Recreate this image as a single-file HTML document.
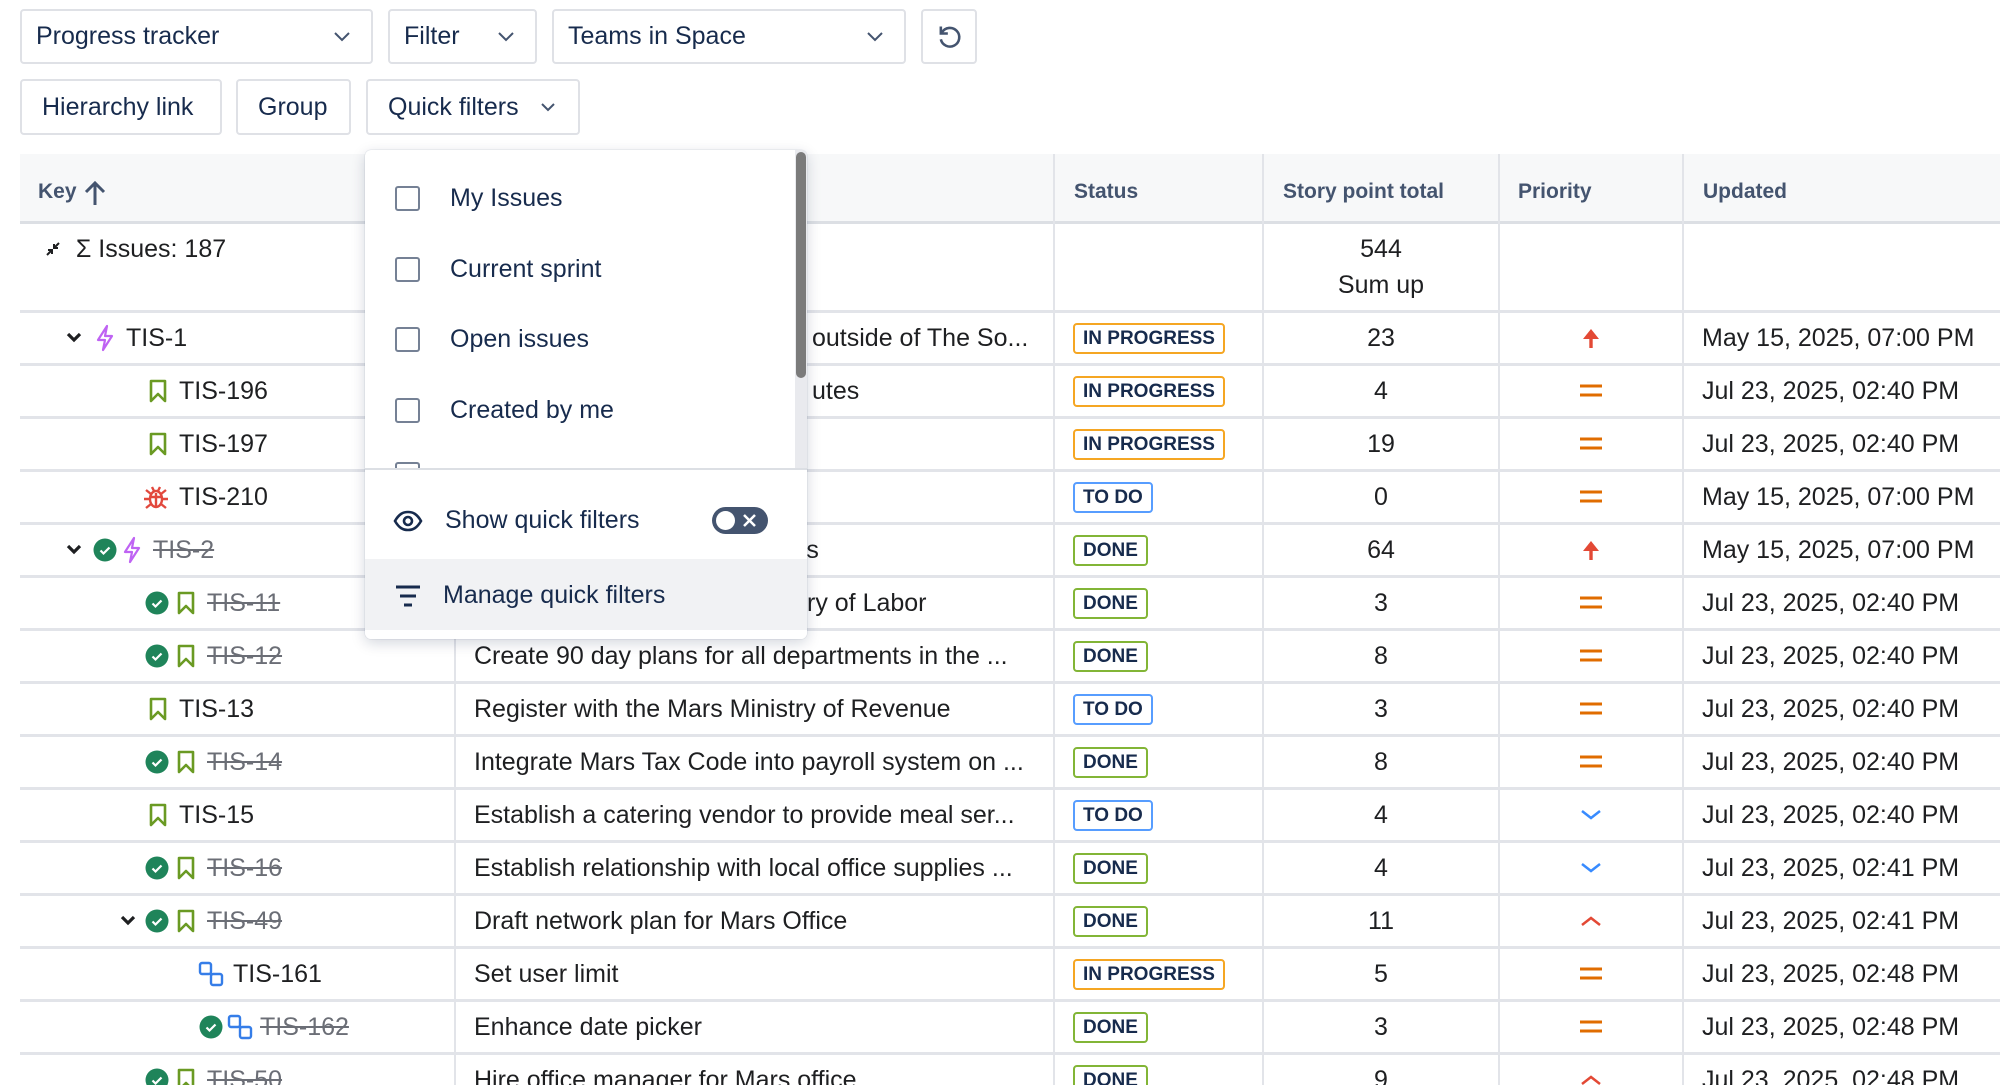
<!DOCTYPE html>
<html><head><meta charset="utf-8">
<style>
*{box-sizing:border-box;margin:0;padding:0}
html{width:2000px;height:1085px;overflow:hidden}
body{width:2000px;height:1085px;overflow:hidden;background:#fff;font-family:"Liberation Sans",Arial,sans-serif;color:#1e1f21;position:relative}
.btn{position:absolute;border:2px solid #dfe1e6;border-radius:4px;background:#fff;color:#172b4d;font-size:25px;display:flex;align-items:center;padding-left:14px}
.btn svg{position:absolute;right:20px}
.ab{position:absolute}
.hdr{position:absolute;top:154px;left:20px;width:1980px;height:70px;background:#f7f8f9;border-bottom:3px solid #dcdfe4}
.hl{position:absolute;font-weight:bold;font-size:21px;color:#44546f;top:180px}
.vl{position:absolute;top:154px;width:2px;height:931px;background:#e2e4e9}
.row{position:absolute;left:20px;width:1980px;height:53px;border-bottom:3px solid #e2e4e9}
.c{position:absolute;top:0;height:50px;display:flex;align-items:center;font-size:25px;white-space:nowrap}
.st{color:#6b6e76;text-decoration:line-through}
.bd{font-size:19px;font-weight:bold;color:#172b4d;border:2px solid;border-radius:4px;padding:0 8px;height:31px;line-height:27px}
.ip{border-color:#f5a623}.td{border-color:#579dff}.dn{border-color:#82b536}
.pts{left:1243px;width:236px;justify-content:center}
.pri{left:1479px;width:184px;justify-content:center}
.dt{left:1662px;padding-left:20px}
.sm{left:434px;padding-left:20px}
.bs{left:1053px}
.dd{position:absolute;left:365px;top:150px;width:442px;height:489px;background:#fff;border-radius:6px;box-shadow:0 4px 14px rgba(9,30,66,.18),0 0 1px rgba(9,30,66,.3);overflow:hidden;z-index:5}
.it{position:absolute;font-size:25px;color:#172b4d;display:flex;align-items:center}
.cb{width:25px;height:25px;border:2px solid #758195;border-radius:3px;margin-right:30px;margin-left:30px}
</style></head><body>

<svg width="0" height="0" style="position:absolute">
<defs>
<symbol id="ch" viewBox="0 0 16 12"><path d="M2 2l6 6 6-6" fill="none" stroke="#1e1f21" stroke-width="3.2"/></symbol>
<symbol id="ep" viewBox="0 0 22 28"><path d="M13 2L4 16h7l-2 10 9-14h-7z" fill="none" stroke="#bf63f3" stroke-width="2.2" stroke-linejoin="round"/></symbol>
<symbol id="bm" viewBox="0 0 18 24"><path d="M2 2h14v20l-7-7-7 7z" fill="none" stroke="#6a9a23" stroke-width="2.6" stroke-linejoin="round"/></symbol>
<symbol id="bug" viewBox="0 0 28 28"><g fill="none" stroke="#e2483d" stroke-width="2.4"><ellipse cx="14" cy="16" rx="6" ry="8"/><path d="M8 14h12M14 10v14M2 16h6M20 16h6M4 7l5 4M24 7l-5 4M4 25l5-4M24 25l-5-4M10 4l2 4M18 4l-2 4"/></g></symbol>
<symbol id="ok" viewBox="0 0 24 24"><circle cx="12" cy="12" r="11.5" fill="#1f845a"/><path d="M7.5 12.5l3 3 6-6" fill="none" stroke="#fff" stroke-width="2.2"/></symbol>
<symbol id="sub" viewBox="0 0 26 26"><g fill="none" stroke="#357de8" stroke-width="2.4"><rect x="2" y="2" width="11" height="11" rx="2"/><rect x="13" y="13" width="11" height="11" rx="2"/></g></symbol>
<symbol id="ph" viewBox="0 0 20 22"><path d="M10 21V8" stroke="#e34935" stroke-width="3.4"/><path d="M2 12l8-10 8 10z" fill="#e34935"/></symbol>
<symbol id="pm" viewBox="0 0 24 16"><path d="M1 3h22M1 12h22" stroke="#e06c00" stroke-width="3"/></symbol>
<symbol id="pl" viewBox="0 0 22 12"><path d="M2 2l9 7 9-7" fill="none" stroke="#388bff" stroke-width="2.5"/></symbol>
<symbol id="pu" viewBox="0 0 22 12"><path d="M2 10l9-7 9 7" fill="none" stroke="#e34935" stroke-width="2.5"/></symbol>
</defs></svg>

<div class="btn" style="left:20px;top:9px;width:353px;height:55px">Progress tracker<svg width="18" height="12" viewBox="0 0 18 12"><path d="M2 2l7 7 7-7" fill="none" stroke="#44546f" stroke-width="2"/></svg></div>
<div class="btn" style="left:388px;top:9px;width:149px;height:55px">Filter<svg width="18" height="12" viewBox="0 0 18 12"><path d="M2 2l7 7 7-7" fill="none" stroke="#44546f" stroke-width="2"/></svg></div>
<div class="btn" style="left:552px;top:9px;width:354px;height:55px">Teams in Space<svg width="18" height="12" viewBox="0 0 18 12"><path d="M2 2l7 7 7-7" fill="none" stroke="#44546f" stroke-width="2"/></svg></div>
<div class="btn" style="left:921px;top:9px;width:56px;height:55px;padding:0;justify-content:center"><svg style="position:static" width="28" height="28" viewBox="0 0 24 24"><path d="M6 8a8 8 0 1 1-1 6" fill="none" stroke="#44546f" stroke-width="2.2"/><path d="M5 3v6h6" fill="none" stroke="#44546f" stroke-width="2.2"/></svg></div>

<div class="btn" style="left:20px;top:79px;width:202px;height:56px;padding-left:20px">Hierarchy link</div>
<div class="btn" style="left:236px;top:79px;width:115px;height:56px;padding-left:20px">Group</div>
<div class="btn" style="left:366px;top:79px;width:214px;height:56px;padding-left:20px">Quick filters<svg style="right:22px" width="16" height="10" viewBox="0 0 16 10"><path d="M2 2l6 6 6-6" fill="none" stroke="#44546f" stroke-width="2"/></svg></div>

<div class="hdr"></div>
<div class="hl" style="left:38px">Key</div>
<svg class="ab" style="left:84px;top:180px" width="22" height="26" viewBox="0 0 22 26"><path d="M11 25V3M2 12l9-9 9 9" fill="none" stroke="#44546f" stroke-width="3"/></svg>
<div class="hl" style="left:1074px">Status</div>
<div class="hl" style="left:1283px">Story point total</div>
<div class="hl" style="left:1518px">Priority</div>
<div class="hl" style="left:1703px">Updated</div>
<div class="vl" style="left:454px"></div>
<div class="vl" style="left:1053px"></div>
<div class="vl" style="left:1262px"></div>
<div class="vl" style="left:1498px"></div>
<div class="vl" style="left:1682px"></div>

<div class="row" style="top:224px;height:89px">
<div class="c" style="left:24px;top:10px;height:30px"><svg width="18" height="18" viewBox="0 0 18 18"><path d="M3 15l5-5M4 10h4v4M15 3l-5 5M10 4v4h4" fill="none" stroke="#1e1f21" stroke-width="2"/></svg>&nbsp;&nbsp;Σ Issues: 187</div>
<div class="c pts" style="top:10px;height:30px">544</div>
<div class="c pts" style="top:46px;height:30px">Sum up</div>
</div>

<div class="row" style="top:313px"><div class="c" style="left:46px"><svg width="16" height="12"><use href="#ch"/></svg></div><div class="c" style="left:74px"><svg width="22" height="28"><use href="#ep"/></svg></div><div class="c" style="left:106px">TIS-1</div><div class="c" style="left:792px">outside of The So...</div><div class="c bs"><span class="bd ip">IN PROGRESS</span></div><div class="c pts">23</div><div class="c pri"><svg width="20" height="24"><use href="#ph"/></svg></div><div class="c dt">May 15, 2025, 07:00 PM</div></div>

<div class="row" style="top:366px"><div class="c" style="left:129px"><svg width="18" height="24"><use href="#bm"/></svg></div><div class="c" style="left:159px">TIS-196</div><div class="c" style="left:792px">utes</div><div class="c bs"><span class="bd ip">IN PROGRESS</span></div><div class="c pts">4</div><div class="c pri"><svg width="24" height="16"><use href="#pm"/></svg></div><div class="c dt">Jul 23, 2025, 02:40 PM</div></div>

<div class="row" style="top:419px"><div class="c" style="left:129px"><svg width="18" height="24"><use href="#bm"/></svg></div><div class="c" style="left:159px">TIS-197</div><div class="c bs"><span class="bd ip">IN PROGRESS</span></div><div class="c pts">19</div><div class="c pri"><svg width="24" height="16"><use href="#pm"/></svg></div><div class="c dt">Jul 23, 2025, 02:40 PM</div></div>

<div class="row" style="top:472px"><div class="c" style="left:122px"><svg width="28" height="28"><use href="#bug"/></svg></div><div class="c" style="left:159px">TIS-210</div><div class="c bs"><span class="bd td">TO DO</span></div><div class="c pts">0</div><div class="c pri"><svg width="24" height="16"><use href="#pm"/></svg></div><div class="c dt">May 15, 2025, 07:00 PM</div></div>

<div class="row" style="top:525px"><div class="c" style="left:46px"><svg width="16" height="12"><use href="#ch"/></svg></div><div class="c" style="left:73px"><svg width="24" height="24"><use href="#ok"/></svg></div><div class="c" style="left:101px"><svg width="22" height="28"><use href="#ep"/></svg></div><div class="c st" style="left:133px">TIS-2</div><div class="c" style="left:778px">rs</div><div class="c bs"><span class="bd dn">DONE</span></div><div class="c pts">64</div><div class="c pri"><svg width="20" height="24"><use href="#ph"/></svg></div><div class="c dt">May 15, 2025, 07:00 PM</div></div>

<div class="row" style="top:578px"><div class="c" style="left:125px"><svg width="24" height="24"><use href="#ok"/></svg></div><div class="c" style="left:157px"><svg width="18" height="24"><use href="#bm"/></svg></div><div class="c st" style="left:187px">TIS-11</div><div class="c" style="left:787px">ry of Labor</div><div class="c bs"><span class="bd dn">DONE</span></div><div class="c pts">3</div><div class="c pri"><svg width="24" height="16"><use href="#pm"/></svg></div><div class="c dt">Jul 23, 2025, 02:40 PM</div></div>

<div class="row" style="top:631px"><div class="c" style="left:125px"><svg width="24" height="24"><use href="#ok"/></svg></div><div class="c" style="left:157px"><svg width="18" height="24"><use href="#bm"/></svg></div><div class="c st" style="left:187px">TIS-12</div><div class="c sm">Create 90 day plans for all departments in the ...</div><div class="c bs"><span class="bd dn">DONE</span></div><div class="c pts">8</div><div class="c pri"><svg width="24" height="16"><use href="#pm"/></svg></div><div class="c dt">Jul 23, 2025, 02:40 PM</div></div>

<div class="row" style="top:684px"><div class="c" style="left:129px"><svg width="18" height="24"><use href="#bm"/></svg></div><div class="c" style="left:159px">TIS-13</div><div class="c sm">Register with the Mars Ministry of Revenue</div><div class="c bs"><span class="bd td">TO DO</span></div><div class="c pts">3</div><div class="c pri"><svg width="24" height="16"><use href="#pm"/></svg></div><div class="c dt">Jul 23, 2025, 02:40 PM</div></div>

<div class="row" style="top:737px"><div class="c" style="left:125px"><svg width="24" height="24"><use href="#ok"/></svg></div><div class="c" style="left:157px"><svg width="18" height="24"><use href="#bm"/></svg></div><div class="c st" style="left:187px">TIS-14</div><div class="c sm">Integrate Mars Tax Code into payroll system on ...</div><div class="c bs"><span class="bd dn">DONE</span></div><div class="c pts">8</div><div class="c pri"><svg width="24" height="16"><use href="#pm"/></svg></div><div class="c dt">Jul 23, 2025, 02:40 PM</div></div>

<div class="row" style="top:790px"><div class="c" style="left:129px"><svg width="18" height="24"><use href="#bm"/></svg></div><div class="c" style="left:159px">TIS-15</div><div class="c sm">Establish a catering vendor to provide meal ser...</div><div class="c bs"><span class="bd td">TO DO</span></div><div class="c pts">4</div><div class="c pri"><svg width="22" height="12"><use href="#pl"/></svg></div><div class="c dt">Jul 23, 2025, 02:40 PM</div></div>

<div class="row" style="top:843px"><div class="c" style="left:125px"><svg width="24" height="24"><use href="#ok"/></svg></div><div class="c" style="left:157px"><svg width="18" height="24"><use href="#bm"/></svg></div><div class="c st" style="left:187px">TIS-16</div><div class="c sm">Establish relationship with local office supplies ...</div><div class="c bs"><span class="bd dn">DONE</span></div><div class="c pts">4</div><div class="c pri"><svg width="22" height="12"><use href="#pl"/></svg></div><div class="c dt">Jul 23, 2025, 02:41 PM</div></div>

<div class="row" style="top:896px"><div class="c" style="left:100px"><svg width="16" height="12"><use href="#ch"/></svg></div><div class="c" style="left:125px"><svg width="24" height="24"><use href="#ok"/></svg></div><div class="c" style="left:157px"><svg width="18" height="24"><use href="#bm"/></svg></div><div class="c st" style="left:187px">TIS-49</div><div class="c sm">Draft network plan for Mars Office</div><div class="c bs"><span class="bd dn">DONE</span></div><div class="c pts">11</div><div class="c pri"><svg width="22" height="12"><use href="#pu"/></svg></div><div class="c dt">Jul 23, 2025, 02:41 PM</div></div>

<div class="row" style="top:949px"><div class="c" style="left:178px"><svg width="26" height="26"><use href="#sub"/></svg></div><div class="c" style="left:213px">TIS-161</div><div class="c sm">Set user limit</div><div class="c bs"><span class="bd ip">IN PROGRESS</span></div><div class="c pts">5</div><div class="c pri"><svg width="24" height="16"><use href="#pm"/></svg></div><div class="c dt">Jul 23, 2025, 02:48 PM</div></div>

<div class="row" style="top:1002px"><div class="c" style="left:179px"><svg width="24" height="24"><use href="#ok"/></svg></div><div class="c" style="left:207px"><svg width="26" height="26"><use href="#sub"/></svg></div><div class="c st" style="left:240px">TIS-162</div><div class="c sm">Enhance date picker</div><div class="c bs"><span class="bd dn">DONE</span></div><div class="c pts">3</div><div class="c pri"><svg width="24" height="16"><use href="#pm"/></svg></div><div class="c dt">Jul 23, 2025, 02:48 PM</div></div>

<div class="row" style="top:1055px;height:30px;border-bottom:none;overflow:hidden"><div class="c" style="left:125px"><svg width="24" height="24"><use href="#ok"/></svg></div><div class="c" style="left:157px"><svg width="18" height="24"><use href="#bm"/></svg></div><div class="c st" style="left:187px">TIS-50</div><div class="c sm">Hire office manager for Mars office</div><div class="c bs"><span class="bd dn">DONE</span></div><div class="c pts">9</div><div class="c pri"><svg width="22" height="12"><use href="#pu"/></svg></div><div class="c dt">Jul 23, 2025, 02:48 PM</div></div>

<div class="dd">
<div class="it" style="top:34px;left:0"><div class="cb"></div>My Issues</div>
<div class="it" style="top:105px;left:0"><div class="cb"></div>Current sprint</div>
<div class="it" style="top:175px;left:0"><div class="cb"></div>Open issues</div>
<div class="it" style="top:246px;left:0"><div class="cb"></div>Created by me</div>
<div class="ab" style="left:30px;top:312px;width:25px;height:10px;border:2px solid #758195;border-bottom:none;border-radius:3px 3px 0 0"></div>
<div class="ab" style="left:430px;top:0;width:12px;height:319px;background:#e9eaee"></div>
<div class="ab" style="left:431px;top:2px;width:10px;height:226px;background:#7b7b7b;border-radius:5px"></div>
<div class="ab" style="left:0;top:318px;width:442px;height:2px;background:#dcdfe4"></div>
<div class="ab" style="left:0;top:320px;width:442px;height:169px;background:#fff"></div>
<div class="it" style="top:356px;left:28px"><svg width="30" height="22" viewBox="0 0 30 22" style="margin-right:22px"><path d="M2 11C6 4 10 2 15 2s9 2 13 9c-4 7-8 9-13 9S6 18 2 11z" fill="none" stroke="#172b4d" stroke-width="2.6"/><circle cx="15" cy="11" r="4" fill="none" stroke="#172b4d" stroke-width="2.6"/></svg>Show quick filters</div>
<div class="ab" style="left:347px;top:357px;width:56px;height:27px;border-radius:14px;background:#44546f"><div class="ab" style="left:4px;top:4px;width:19px;height:19px;border-radius:50%;background:#fff"></div><svg class="ab" style="left:30px;top:6px" width="15" height="15" viewBox="0 0 15 15"><path d="M2 2l11 11M13 2L2 13" stroke="#fff" stroke-width="2.5"/></svg></div>
<div class="ab" style="left:0;top:409px;width:442px;height:71px;background:#f1f2f4"></div>
<div class="it" style="top:431px;left:30px"><svg width="26" height="24" viewBox="0 0 26 24" style="margin-right:22px"><path d="M1 3h24M5 12h16M9 21h8" stroke="#172b4d" stroke-width="3"/></svg>Manage quick filters</div>
</div>
</body></html>
